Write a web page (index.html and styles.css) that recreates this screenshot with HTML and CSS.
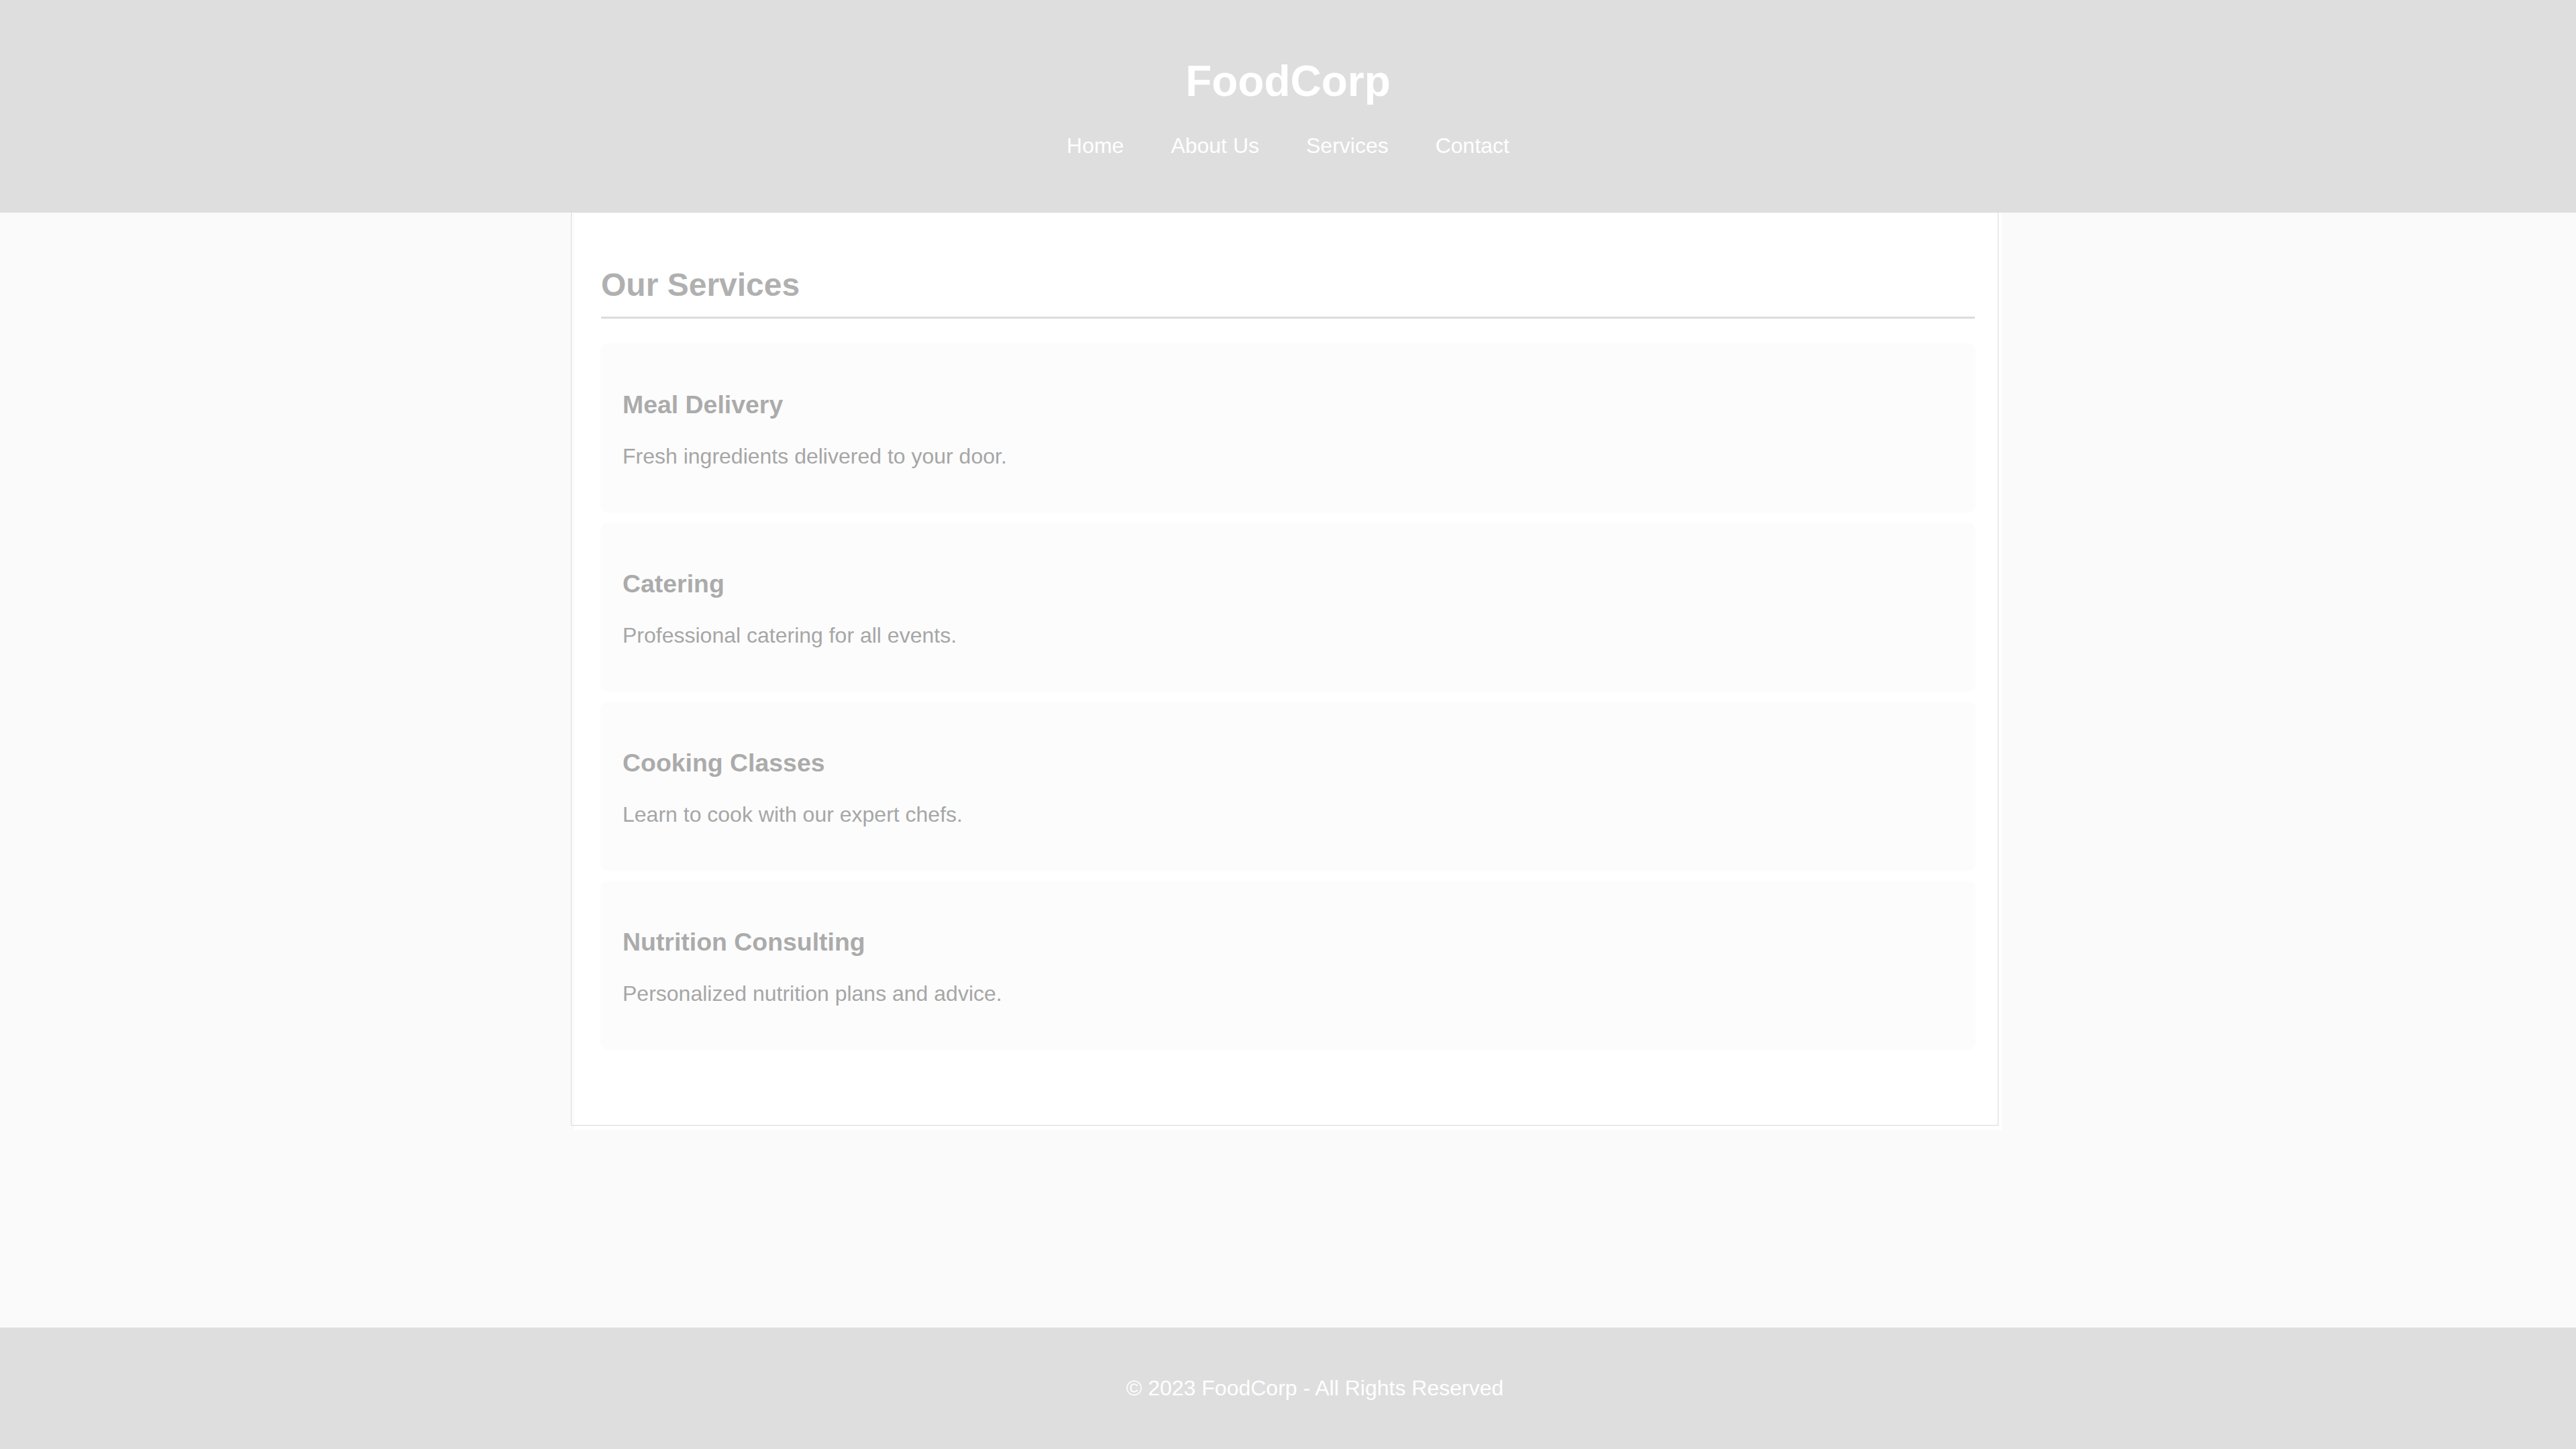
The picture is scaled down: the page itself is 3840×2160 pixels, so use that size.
FILE: index.html
```html
<!DOCTYPE html>
<html lang="en">
<head>
<meta charset="utf-8">
<title>FoodCorp - Our Services</title>
<link rel="stylesheet" href="styles.css">
</head>
<body>
<header class="site-header">
  <h1 class="brand">FoodCorp</h1>
  <nav>
    <ul class="nav-list">
      <li><a href="#">Home</a></li>
      <li><a href="#">About Us</a></li>
      <li><a href="#">Services</a></li>
      <li><a href="#">Contact</a></li>
    </ul>
  </nav>
</header>
<main class="main">
  <section class="container">
    <h2 class="section-title">Our Services</h2>
    <div class="service-list">
      <div class="service">
        <h3>Meal Delivery</h3>
        <p>Fresh ingredients delivered to your door.</p>
      </div>
      <div class="service">
        <h3>Catering</h3>
        <p>Professional catering for all events.</p>
      </div>
      <div class="service">
        <h3>Cooking Classes</h3>
        <p>Learn to cook with our expert chefs.</p>
      </div>
      <div class="service">
        <h3>Nutrition Consulting</h3>
        <p>Personalized nutrition plans and advice.</p>
      </div>
    </div>
  </section>
</main>
<footer class="site-footer">
  <p>&copy; 2023 FoodCorp - All Rights Reserved</p>
</footer>
</body>
</html>
```

FILE: styles.css
```css
html, body {
  margin: 0;
  padding: 0;
}

body {
  font-family: "Liberation Sans", Arial, sans-serif;
  font-size: 32px;
  background: #fafafa;
  min-height: 100vh;
  display: flex;
  flex-direction: column;
}

.site-header {
  background: #dedede;
  text-align: center;
  padding: 41px 0 40px;
  height: 317px;
  box-sizing: border-box;
}

.brand {
  margin: 43px 0 0;
  font-size: 64px;
  font-weight: bold;
  color: #ffffff;
  line-height: normal;
}

.nav-list {
  list-style: none;
  margin: 41px 0 0;
  padding: 0;
  display: flex;
  justify-content: center;
  gap: 70px;
}

.nav-list a {
  color: #ffffff;
  text-decoration: none;
  font-size: 32px;
}

.main {
  flex: 1;
}

.container {
  position: relative;
  width: 2128px;
  box-sizing: border-box;
  margin: 0 auto;
  background: #ffffff;
  padding: 40px 40px 120px;
}

.container::before {
  content: "";
  position: absolute;
  left: -5px;
  top: -4px;
  right: 5px;
  bottom: 6px;
  border: 1px solid #dadada;
  border-top-color: transparent;
  pointer-events: none;
}

.section-title {
  margin: 40px 0 38px;
  font-size: 48px;
  font-weight: bold;
  color: #b0b0b0;
  padding-bottom: 20px;
  border-bottom: 3px solid #dcdcdc;
  line-height: normal;
}

.service-list {
  display: flex;
  flex-direction: column;
  gap: 17px;
}

.service {
  background: #fcfcfc;
  border-radius: 10px;
  padding: 32px;
  box-shadow: 0 0 5px rgba(0, 0, 0, 0.018);
}

.service h3 {
  margin: 37px 0;
  font-size: 37.44px;
  font-weight: bold;
  color: #ababab;
  line-height: normal;
}

.service p {
  margin: 32px 0;
  font-size: 32px;
  color: #a6a6a6;
  line-height: normal;
}

.site-footer {
  background: #dedede;
  text-align: center;
  padding: 40px 0 40px 80px;
}

.site-footer p {
  margin: 32px 0;
  color: #ffffff;
  font-size: 32px;
  line-height: normal;
}
```
